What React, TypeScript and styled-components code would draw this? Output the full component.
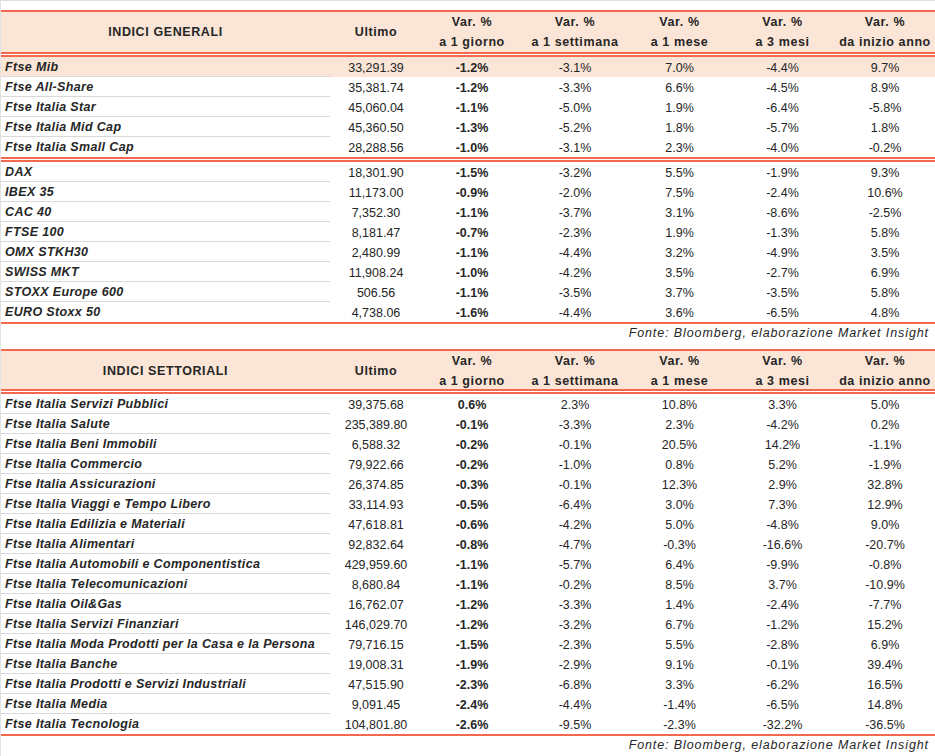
import styled, { createGlobalStyle } from 'styled-components';

const GlobalStyle = createGlobalStyle`
  html, body {
    margin: 0;
    padding: 0;
    background: #ffffff;
  }
  body {
    font-family: "Liberation Sans", Arial, sans-serif;
    color: #262626;
  }
`;

const RED = '#f2694f';
const PEACH = '#fbe5d6';
const COLS = '329px 92px 100px 106px 103px 103px 102px';

type Row = [string, string, string, string, string, string, string];

const generali: Row[] = [
  ['Ftse Mib', '33,291.39', '-1.2%', '-3.1%', '7.0%', '-4.4%', '9.7%'],
  ['Ftse All-Share', '35,381.74', '-1.2%', '-3.3%', '6.6%', '-4.5%', '8.9%'],
  ['Ftse Italia Star', '45,060.04', '-1.1%', '-5.0%', '1.9%', '-6.4%', '-5.8%'],
  ['Ftse Italia Mid Cap', '45,360.50', '-1.3%', '-5.2%', '1.8%', '-5.7%', '1.8%'],
  ['Ftse Italia Small Cap', '28,288.56', '-1.0%', '-3.1%', '2.3%', '-4.0%', '-0.2%'],
];

const esteri: Row[] = [
  ['DAX', '18,301.90', '-1.5%', '-3.2%', '5.5%', '-1.9%', '9.3%'],
  ['IBEX 35', '11,173.00', '-0.9%', '-2.0%', '7.5%', '-2.4%', '10.6%'],
  ['CAC 40', '7,352.30', '-1.1%', '-3.7%', '3.1%', '-8.6%', '-2.5%'],
  ['FTSE 100', '8,181.47', '-0.7%', '-2.3%', '1.9%', '-1.3%', '5.8%'],
  ['OMX STKH30', '2,480.99', '-1.1%', '-4.4%', '3.2%', '-4.9%', '3.5%'],
  ['SWISS MKT', '11,908.24', '-1.0%', '-4.2%', '3.5%', '-2.7%', '6.9%'],
  ['STOXX Europe 600', '506.56', '-1.1%', '-3.5%', '3.7%', '-3.5%', '5.8%'],
  ['EURO Stoxx 50', '4,738.06', '-1.6%', '-4.4%', '3.6%', '-6.5%', '4.8%'],
];

const settoriali: Row[] = [
  ['Ftse Italia Servizi Pubblici', '39,375.68', '0.6%', '2.3%', '10.8%', '3.3%', '5.0%'],
  ['Ftse Italia Salute', '235,389.80', '-0.1%', '-3.3%', '2.3%', '-4.2%', '0.2%'],
  ['Ftse Italia Beni Immobili', '6,588.32', '-0.2%', '-0.1%', '20.5%', '14.2%', '-1.1%'],
  ['Ftse Italia Commercio', '79,922.66', '-0.2%', '-1.0%', '0.8%', '5.2%', '-1.9%'],
  ['Ftse Italia Assicurazioni', '26,374.85', '-0.3%', '-0.1%', '12.3%', '2.9%', '32.8%'],
  ['Ftse Italia Viaggi e Tempo Libero', '33,114.93', '-0.5%', '-6.4%', '3.0%', '7.3%', '12.9%'],
  ['Ftse Italia Edilizia e Materiali', '47,618.81', '-0.6%', '-4.2%', '5.0%', '-4.8%', '9.0%'],
  ['Ftse Italia Alimentari', '92,832.64', '-0.8%', '-4.7%', '-0.3%', '-16.6%', '-20.7%'],
  ['Ftse Italia Automobili e Componentistica', '429,959.60', '-1.1%', '-5.7%', '6.4%', '-9.9%', '-0.8%'],
  ['Ftse Italia Telecomunicazioni', '8,680.84', '-1.1%', '-0.2%', '8.5%', '3.7%', '-10.9%'],
  ['Ftse Italia Oil&Gas', '16,762.07', '-1.2%', '-3.3%', '1.4%', '-2.4%', '-7.7%'],
  ['Ftse Italia Servizi Finanziari', '146,029.70', '-1.2%', '-3.2%', '6.7%', '-1.2%', '15.2%'],
  ['Ftse Italia Moda Prodotti per la Casa e la Persona', '79,716.15', '-1.5%', '-2.3%', '5.5%', '-2.8%', '6.9%'],
  ['Ftse Italia Banche', '19,008.31', '-1.9%', '-2.9%', '9.1%', '-0.1%', '39.4%'],
  ['Ftse Italia Prodotti e Servizi Industriali', '47,515.90', '-2.3%', '-6.8%', '3.3%', '-6.2%', '16.5%'],
  ['Ftse Italia Media', '9,091.45', '-2.4%', '-4.4%', '-1.4%', '-6.5%', '14.8%'],
  ['Ftse Italia Tecnologia', '104,801.80', '-2.6%', '-9.5%', '-2.3%', '-32.2%', '-36.5%'],
];

const Page = styled.div`
  width: 935px;
  min-height: 756px;
  box-sizing: border-box;
  border-top: 1px solid #dedede;
  border-left: 1px solid #e2e2e2;
  padding-top: 9px;
  display: flex;
  flex-direction: column;
  gap: 7px;
`;

const Block = styled.section`
  display: flex;
  flex-direction: column;
`;

const Table = styled.div`
  display: flex;
  flex-direction: column;
  border-top: 2px solid ${RED};
  border-bottom: 2px solid ${RED};
`;

const HeadRow = styled.div<{ $h: number }>`
  display: grid;
  grid-template-columns: ${COLS};
  height: ${(p) => p.$h}px;
  background: ${PEACH};
  font-size: 12.5px;
  font-weight: 700;
  letter-spacing: 0.6px;
`;

const HeadCell = styled.div`
  display: flex;
  flex-direction: column;
  align-items: center;
  justify-content: center;
  line-height: 20px;
  white-space: nowrap;
`;

const DoubleRule = styled.div`
  height: 1px;
  border-top: 2px solid ${RED};
  border-bottom: 2px solid ${RED};
  background: #ffffff;
`;

const DataRow = styled.div<{ $hl?: boolean }>`
  display: grid;
  grid-template-columns: ${COLS};
  height: 20px;
  background: ${(p) => (p.$hl ? PEACH : 'transparent')};
  font-size: 12.5px;
`;

const NameCell = styled.div<{ $last?: boolean }>`
  box-sizing: border-box;
  display: flex;
  align-items: center;
  padding: 1px 0 0 4px;
  font-weight: 700;
  font-style: italic;
  letter-spacing: 0.35px;
  white-space: nowrap;
  border-bottom: 1px solid ${(p) => (p.$last ? 'transparent' : '#d9d9d9')};
`;

const ValueCell = styled.div<{ $bold?: boolean }>`
  display: flex;
  align-items: center;
  justify-content: center;
  padding-top: 1px;
  font-weight: ${(p) => (p.$bold ? 700 : 400)};
  white-space: nowrap;
`;

const Source = styled.div`
  height: 18px;
  line-height: 18px;
  text-align: right;
  padding-right: 6px;
  font-size: 12.5px;
  font-style: italic;
  letter-spacing: 0.9px;
`;

function Rows({ rows, highlightFirst }: { rows: Row[]; highlightFirst?: boolean }) {
  return (
    <>
      {rows.map((r, i) => (
        <DataRow key={r[0]} $hl={highlightFirst && i === 0}>
          <NameCell $last={i === rows.length - 1}>{r[0]}</NameCell>
          <ValueCell>{r[1]}</ValueCell>
          <ValueCell $bold>{r[2]}</ValueCell>
          <ValueCell>{r[3]}</ValueCell>
          <ValueCell>{r[4]}</ValueCell>
          <ValueCell>{r[5]}</ValueCell>
          <ValueCell>{r[6]}</ValueCell>
        </DataRow>
      ))}
    </>
  );
}

function Header({ title, height }: { title: string; height: number }) {
  const periods = ['a 1 giorno', 'a 1 settimana', 'a 1 mese', 'a 3 mesi', 'da inizio anno'];
  return (
    <HeadRow $h={height}>
      <HeadCell>{title}</HeadCell>
      <HeadCell>Ultimo</HeadCell>
      {periods.map((p) => (
        <HeadCell key={p}>
          <span>Var. %</span>
          <span>{p}</span>
        </HeadCell>
      ))}
    </HeadRow>
  );
}

export default function App() {
  return (
    <>
      <GlobalStyle />
      <Page>
        <Block>
          <Table>
            <Header title="INDICI GENERALI" height={40} />
            <DoubleRule />
            <Rows rows={generali} highlightFirst />
            <DoubleRule />
            <Rows rows={esteri} />
          </Table>
          <Source>Fonte: Bloomberg, elaborazione Market Insight</Source>
        </Block>
        <Block>
          <Table>
            <Header title="INDICI SETTORIALI" height={38} />
            <DoubleRule />
            <Rows rows={settoriali} />
          </Table>
          <Source>Fonte: Bloomberg, elaborazione Market Insight</Source>
        </Block>
      </Page>
    </>
  );
}
